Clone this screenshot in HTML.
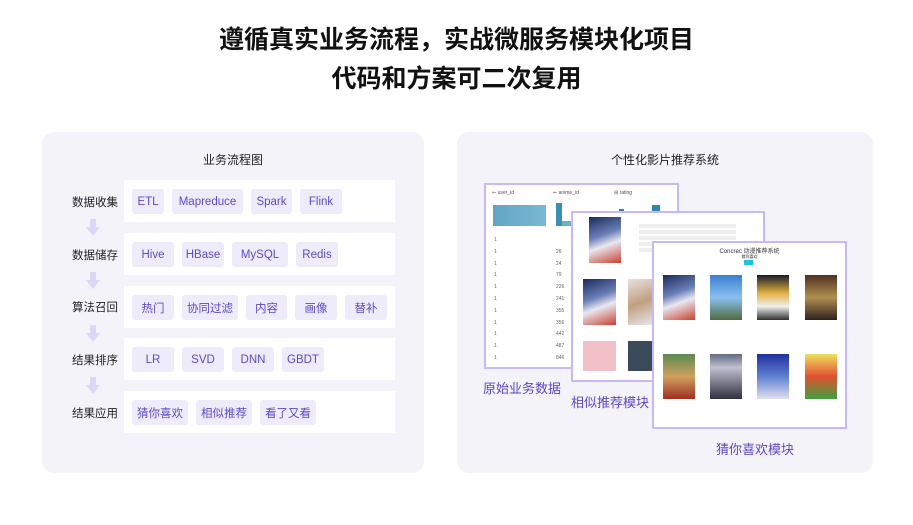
<!DOCTYPE html>
<html><head><meta charset="utf-8"><style>
*{margin:0;padding:0;box-sizing:border-box}
body{width:913px;height:525px;background:#fff;position:relative;overflow:hidden;font-family:"Liberation Sans","Noto Sans CJK SC",sans-serif}
.t{position:absolute;left:0;width:913px;text-align:center;font-size:25px;font-weight:bold;color:#111}
.panel{position:absolute;background:#f4f3fa;border-radius:12px}
.ph{position:absolute;width:100%;text-align:center;font-size:12px;color:#222;top:19px}
.row{position:absolute;left:124px;width:271px;height:42px;background:#fff;display:flex;align-items:center;padding-left:8px;gap:8px}
.chip{height:25px;background:#eeebfb;border-radius:3px;color:#5e4bc4;font-size:11.5px;display:flex;align-items:center;justify-content:center;white-space:nowrap;flex:none;padding-top:1px}
.lab{position:absolute;left:72px;font-size:11.5px;color:#222}
.arr{position:absolute;left:86px;width:14px;height:17px}
.scr{position:absolute;background:#fff;border:2px solid #c6b9f6;overflow:hidden}
.cap{position:absolute;font-size:13px;color:#5b47c6}
.post{position:absolute;width:32px;height:45px}
</style></head><body>
<div class="t" style="top:20px">遵循真实业务流程，实战微服务模块化项目</div>
<div class="t" style="top:59px">代码和方案可二次复用</div>

<div class="panel" style="left:42px;top:132px;width:382px;height:341px">
<div class="ph">业务流程图</div></div>
<div class="lab" style="top:194px">数据收集</div>
<div class="lab" style="top:247px">数据储存</div>
<div class="lab" style="top:299px">算法召回</div>
<div class="lab" style="top:352px">结果排序</div>
<div class="lab" style="top:405px">结果应用</div>
<svg class="arr" style="top:219px" viewBox="0 0 14 17"><path d="M4 0h6v8h4L7 17 0 8h4z" fill="#dcd6f8"/></svg>
<svg class="arr" style="top:272px" viewBox="0 0 14 17"><path d="M4 0h6v8h4L7 17 0 8h4z" fill="#dcd6f8"/></svg>
<svg class="arr" style="top:325px" viewBox="0 0 14 17"><path d="M4 0h6v8h4L7 17 0 8h4z" fill="#dcd6f8"/></svg>
<svg class="arr" style="top:377px" viewBox="0 0 14 17"><path d="M4 0h6v8h4L7 17 0 8h4z" fill="#dcd6f8"/></svg>
<div class="row" style="top:180px"><span class="chip" style="width:32px">ETL</span><span class="chip" style="width:71px">Mapreduce</span><span class="chip" style="width:41px">Spark</span><span class="chip" style="width:42px">Flink</span></div>
<div class="row" style="top:233px"><span class="chip" style="width:42px">Hive</span><span class="chip" style="width:42px">HBase</span><span class="chip" style="width:56px">MySQL</span><span class="chip" style="width:42px">Redis</span></div>
<div class="row" style="top:286px"><span class="chip" style="width:42px">热门</span><span class="chip" style="width:56px">协同过滤</span><span class="chip" style="width:41px">内容</span><span class="chip" style="width:42px">画像</span><span class="chip" style="width:42px">替补</span></div>
<div class="row" style="top:338px"><span class="chip" style="width:42px">LR</span><span class="chip" style="width:42px">SVD</span><span class="chip" style="width:42px">DNN</span><span class="chip" style="width:42px">GBDT</span></div>
<div class="row" style="top:391px"><span class="chip" style="width:56px">猜你喜欢</span><span class="chip" style="width:56px">相似推荐</span><span class="chip" style="width:56px">看了又看</span></div>

<div class="panel" style="left:457px;top:132px;width:416px;height:341px">
<div class="ph">个性化影片推荐系统</div></div>

<div class="scr" style="left:484px;top:183px;width:195px;height:186px">
<div style="position:absolute;left:6px;top:5px;font-size:5px;color:#555">⇜ user_id</div>
<div style="position:absolute;left:67px;top:5px;font-size:5px;color:#555">⇜ anime_id</div>
<div style="position:absolute;left:128px;top:5px;font-size:5px;color:#555">⊞ rating</div>
<div style="position:absolute;left:7px;top:20px;width:53px;height:21px;background:linear-gradient(90deg,#3a8fb5,#5aa6c8);opacity:.8"></div>
<div style="position:absolute;left:70px;top:18px;width:6px;height:23px;background:#3a8fb5"></div>
<div style="position:absolute;left:76px;top:36px;width:10px;height:5px;background:#6cb0cf"></div>
<div style="position:absolute;left:133px;top:24px;width:5px;height:17px;background:#2c86b0"></div>
<div style="position:absolute;left:166px;top:20px;width:8px;height:21px;background:#2c86b0"></div>
<div style="position:absolute;left:8px;top:50px;font-size:5px;line-height:11.8px;color:#666">1<br>1<br>1<br>1<br>1<br>1<br>1<br>1<br>1<br>1<br>1<br>1</div>
<div style="position:absolute;left:70px;top:50px;font-size:5px;line-height:11.8px;color:#666"><br>28<br>24<br>79<br>226<br>241<br>355<br>356<br>442<br>487<br>846<br>936</div>
</div>

<div class="scr" style="left:571px;top:211px;width:194px;height:171px">
<div class="post" style="left:16px;top:4px;width:32px;height:46px;background:linear-gradient(160deg,#1a2a5a,#6b7fb8 40%,#e8e8f0 60%,#c84030)"></div>
<div style="position:absolute;left:66px;top:11px;width:97px;height:28px;background:repeating-linear-gradient(#eee 0 4px,#fff 4px 6px)"></div>
<div class="post" style="left:10px;top:66px;width:33px;height:46px;background:linear-gradient(160deg,#1a2a5a,#6b7fb8 40%,#e8e8f0 60%,#c84030)"></div>
<div class="post" style="left:55px;top:66px;width:28px;height:46px;background:linear-gradient(160deg,#e8e0e0,#c0a080 50%,#e8e8f0)"></div>
<div class="post" style="left:10px;top:128px;width:33px;height:30px;background:#f2c0c8"></div>
<div class="post" style="left:55px;top:128px;width:28px;height:30px;background:#3a4a5a"></div>
</div>

<div class="scr" style="left:652px;top:241px;width:195px;height:188px">
<div style="position:absolute;left:0;width:100%;top:3px;text-align:center;font-size:6px;color:#333">Concrec 动漫推荐系统</div>
<div style="position:absolute;left:0;width:100%;top:11px;text-align:center;font-size:4px;color:#333">猜你喜欢</div>
<div style="position:absolute;left:90px;top:17px;width:9px;height:5px;background:#1fc0e0"></div>
<div class="post" style="left:9px;top:32px;background:linear-gradient(160deg,#1a2a5a,#6b7fb8 40%,#e8e8f0 60%,#c84030)"></div>
<div class="post" style="left:56px;top:32px;background:linear-gradient(#3a80d0,#8ac0f0 50%,#506a40)"></div>
<div class="post" style="left:103px;top:32px;background:linear-gradient(#1a1a2a,#e0b040 40%,#f0f0f0 70%,#303030)"></div>
<div class="post" style="left:151px;top:32px;background:linear-gradient(#503020,#b09050 50%,#302020)"></div>
<div class="post" style="left:9px;top:111px;background:linear-gradient(#5a8a50,#d0a060 50%,#a03020)"></div>
<div class="post" style="left:56px;top:111px;background:linear-gradient(#606a80,#c0c0d0 30%,#303040)"></div>
<div class="post" style="left:103px;top:111px;background:linear-gradient(#2030a0,#6080d0 50%,#e0e0f0)"></div>
<div class="post" style="left:151px;top:111px;background:linear-gradient(#f0e060,#e05030 50%,#40a040)"></div>
</div>

<div class="cap" style="left:483px;top:378px">原始业务数据</div>
<div class="cap" style="left:571px;top:392px">相似推荐模块</div>
<div class="cap" style="left:716px;top:439px">猜你喜欢模块</div>
</body></html>
